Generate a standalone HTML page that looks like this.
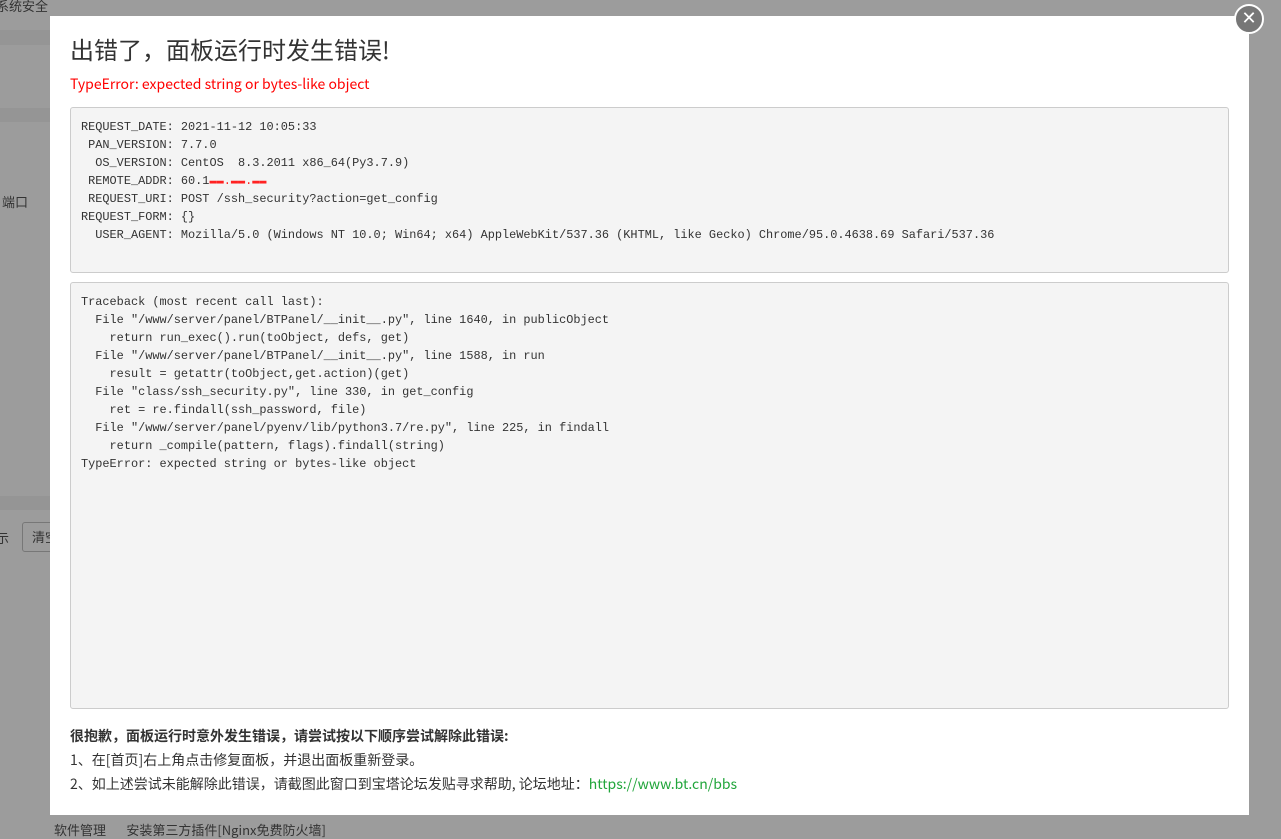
<!DOCTYPE html>
<html><head><meta charset="utf-8"><style>
body{margin:0;width:1281px;height:833px;overflow:hidden;background:#9c9c9c;font-family:"Noto Sans CJK SC",sans-serif;position:relative}
.bg{position:absolute;left:0;color:#333;font-size:13px}
.modal{position:absolute;left:50px;top:16px;width:1199px;height:799px;background:#fff}
h1{position:absolute;left:20px;top:16px;margin:0;font-weight:normal;font-size:24px;color:#333;line-height:34px}
.err{position:absolute;left:20px;top:58px;color:#f00;font-size:14px;line-height:20px}
pre{position:absolute;left:20px;margin:0;width:1137px;background:#f4f4f4;border:1px solid #ccc;border-radius:3px;padding:10px;font-family:"Liberation Mono",monospace;font-size:11.9px;line-height:18px;color:#333;white-space:pre;overflow:hidden}
.foot{position:absolute;left:20px;top:708px;font-size:14px;color:#333;line-height:24px}
.close{position:absolute;left:1234px;top:4px;width:26px;height:26px;border-radius:50%;background:#777;border:2px solid #fff;color:#fff;text-align:center;line-height:26px;font-size:18px;font-family:"DejaVu Sans",sans-serif}
</style></head><body>
<div class="bg" style="top:-4px;left:-4px">系统安全</div>
<div class="bg" style="top:60px;left:-6px;color:#2a8a2a;font-size:18px">)</div>
<div class="bg" style="top:192px;left:2px">端口</div>
<div class="bg" style="top:528px;left:-4px">示</div>
<div style="position:absolute;left:22px;top:522px;width:40px;height:28px;border:1px solid #777;border-radius:3px"></div>
<div class="bg" style="top:527px;left:32px">清空</div>
<div class="bg" style="top:820px;left:54px">软件管理 &nbsp; &nbsp; &nbsp; 安装第三方插件[Nginx免费防火墙]</div>
<div style="position:absolute;left:0;top:30px;width:50px;height:15px;background:#959595"></div>
<div style="position:absolute;left:0;top:108px;width:50px;height:14px;background:#959595"></div>
<div style="position:absolute;left:0;top:496px;width:50px;height:14px;background:#959595"></div>
<div class="modal">
<h1>出错了，面板运行时发生错误!</h1>
<div class="err">TypeError: expected string or bytes-like object</div>
<pre style="top:91px;height:144px">REQUEST_DATE: 2021-11-12 10:05:33
 PAN_VERSION: 7.7.0
  OS_VERSION: CentOS  8.3.2011 x86_64(Py3.7.9)
 REMOTE_ADDR: 60.1<span style="color:#f22">▬▬.▬▬.▬▬</span>
 REQUEST_URI: POST /ssh_security?action=get_config
REQUEST_FORM: {}
  USER_AGENT: Mozilla/5.0 (Windows NT 10.0; Win64; x64) AppleWebKit/537.36 (KHTML, like Gecko) Chrome/95.0.4638.69 Safari/537.36</pre>
<pre style="top:266px;height:405px">Traceback (most recent call last):
  File "/www/server/panel/BTPanel/__init__.py", line 1640, in publicObject
    return run_exec().run(toObject, defs, get)
  File "/www/server/panel/BTPanel/__init__.py", line 1588, in run
    result = getattr(toObject,get.action)(get)
  File "class/ssh_security.py", line 330, in get_config
    ret = re.findall(ssh_password, file)
  File "/www/server/panel/pyenv/lib/python3.7/re.py", line 225, in findall
    return _compile(pattern, flags).findall(string)
TypeError: expected string or bytes-like object</pre>
<div class="foot"><b>很抱歉，面板运行时意外发生错误，请尝试按以下顺序尝试解除此错误:</b><br>1、在[首页]右上角点击修复面板，并退出面板重新登录。<br>2、如上述尝试未能解除此错误，请截图此窗口到宝塔论坛发贴寻求帮助, 论坛地址：<span style="color:#20a53a">https://www.bt.cn/bbs</span></div>
</div>
<div class="close">✕</div>
</body></html>
